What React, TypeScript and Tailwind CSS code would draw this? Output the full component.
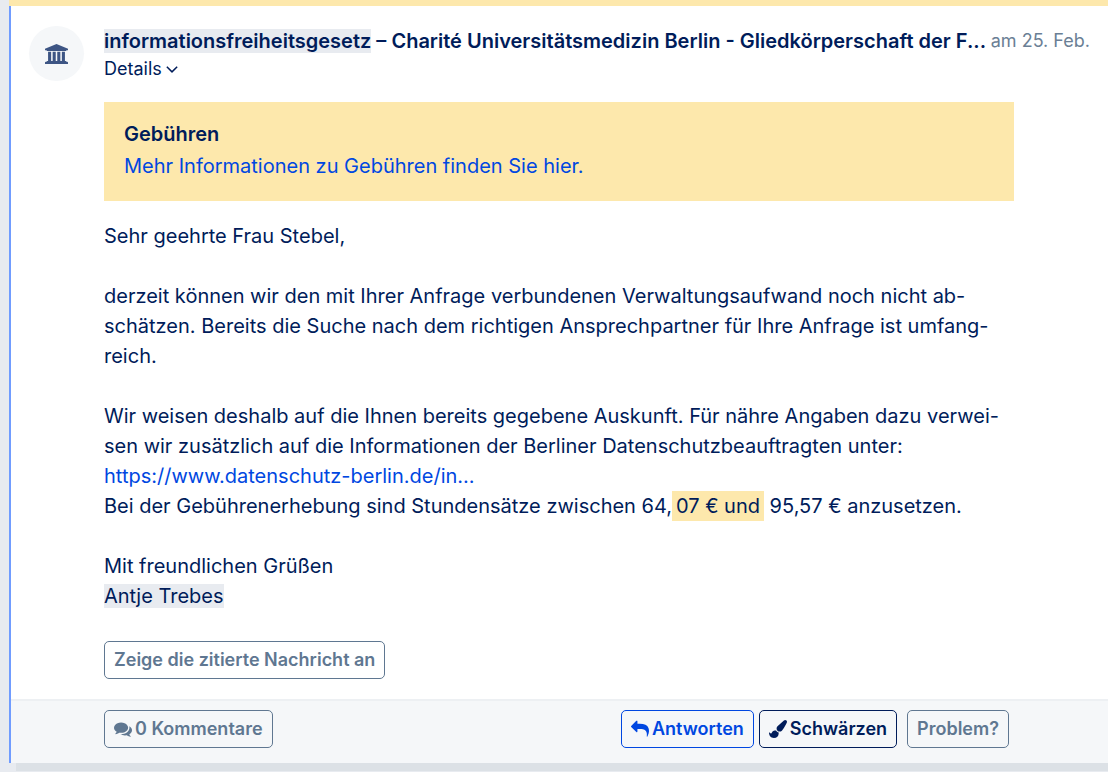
import type { ReactNode } from 'react'
import clsx from 'clsx'

// Font Awesome 4 glyphs on their 1792 unit grid
const icons = {
  university: {
    viewBox: '0 0 1920 1664',
    path: 'M960 0l960 384v128h-128q0 26-20.5 45t-48.5 19h-1526q-28 0-48.500-19t-20.500-45h-128v-128zM256 640h256v768h128v-768h256v768h128v-768h256v768h128v-768h256v768h59q28 0 48.500 19t20.500 45v64h-1664v-64q0-26 20.500-45t48.500-19h59v-768zM1851 1472q28 0 48.500 19t20.500 45v128h-1920v-128q0-26 20.500-45t48.500-19h1782z',
  },
  comments: {
    viewBox: '0 0 1792 1792',
    path: 'M1408 768q0 139-94 257t-256.500 186.500-353.500 68.500q-86 0-176-16-124 88-278 128-36 9-86 16h-3q-11 0-20.500-8t-11.500-21q-1-3-1-6.500t.5-6.500 2-6l2.500-5 3.500-5.500 4-5 4.500-5 4-4.500q5-6 23-25t26-29.500 22.500-29 25-38.500 20.500-44q-124-72-195-177t-71-224q0-139 94-257t256.500-186.500 353.500-68.500 353.500 68.500 256.500 186.500 94 257zm384 256q0 120-71 224.500t-195 176.500q10 24 20.500 44t25 38.500 22.500 29 26 29.500 23 25q1 1 4 4.500t4.500 5 4 5 3.500 5.500l2.500 5 2 6 .5 6.500-1 6.500q-3 14-13 22t-22 7q-50-7-86-16-154-40-278-128-90 16-176 16-271 0-472-132 58 4 88 4 161 0 309-45t264-129q125-92 192-212t67-254q0-77-23-152 129 71 204 178t75 230z',
  },
  reply: {
    viewBox: '0 0 1792 1792',
    path: 'M1792 1120q0 166-127 451-3 7-10.500 24t-13.500 30-13 22q-12 17-28 17-15 0-23.500-10t-8.500-25q0-9 2.500-26.500t2.500-23.500q5-68 5-123 0-101-17.500-181t-48.500-138.500-80-101-105.500-69.500-133-42.500-154-21.500-175.500-6h-224v256q0 26-19 45t-45 19-45-19l-512-512q-19-19-19-45t19-45l512-512q19-19 45-19t45 19 19 45v256h224q713 0 875 403 53 134 53 333z',
  },
  paintBrush: {
    viewBox: '0 0 1792 1792',
    path: 'M1615 0q70 0 122.500 46.500t52.500 116.500q0 63-45 151-332 629-465 752-97 91-218 91-126 0-216.500-92.500t-90.500-219.500q0-128 92-212l638-579q59-54 130-54zm-909 1034q39 76 106.500 130t150.500 76l1 71q4 213-129.500 347t-348.500 134q-123 0-218-46.500t-152.500-127.500-86.500-183-29-220q7 5 41 30t62 44.500 59 36.500 46 17q41 0 55-37 25-66 57.500-112.500t69.500-76 88-47.500 103-25.500 125-10.500z',
  },
  angleDown: {
    viewBox: '0 0 1792 1792',
    path: 'M1395 736q0 13-10 23l-466 466q-10 10-23 10t-23-10l-466-466q-10-10-10-23t10-23l50-50q10-10 23-10t23 10l393 393 393-393q10-10 23-10t23 10l50 50q10 10 10 23z',
  },
}

function Icon({ name, className }: { name: keyof typeof icons; className?: string }) {
  return (
    <svg
      viewBox={icons[name].viewBox}
      fill="currentColor"
      aria-hidden="true"
      className={clsx('shrink-0', className)}
    >
      <path d={icons[name].path} />
    </svg>
  )
}

type ButtonProps = {
  children: ReactNode
  className?: string
}

function OutlineButton({ children, className }: ButtonProps) {
  return (
    <button
      type="button"
      className={clsx(
        'inline-flex items-center gap-[3px] rounded-[5px] border px-[9px] py-[5px] text-[18px] leading-[26px] font-semibold whitespace-nowrap',
        className
      )}
    >
      {children}
    </button>
  )
}

function MessageHeader() {
  return (
    <header className="flex px-[18px] pt-5">
      <div className="flex size-[55px] shrink-0 items-center justify-center rounded-full bg-[#f5f7f9] text-[#3d5584]">
        <Icon name="university" className="h-5 w-[23px]" />
      </div>
      <div className="ml-5 min-w-0 grow">
        <div className="flex items-center gap-1 leading-[30px]">
          <h2 className="truncate font-semibold">
            <span className="bg-[#e8ebf0]">informationsfreiheitsgesetz</span> – Charité
            Universitätsmedizin Berlin - Gliedkörperschaft der F...
          </h2>
          <span className="ml-auto shrink-0 text-[18px] text-[#6b7f95]">am 25. Feb.</span>
        </div>
        <button type="button" className="flex items-center text-[18px] leading-[26px]">
          Details <Icon name="angleDown" className="size-5" />
        </button>
      </div>
    </header>
  )
}

function MessageBody() {
  return (
    <div className="mr-[94px] ml-[93px] pt-5 pb-5">
      <div className="bg-[#fde8ac] px-5 pt-[17px] pb-5">
        <h3 className="font-semibold leading-[30px]">Gebühren</h3>
        <p className="mt-[2px]">
          <a href="#gebuehren" className="text-[#0047e1]">
            Mehr Informationen zu Gebühren finden Sie hier.
          </a>
        </p>
      </div>
      <div className="mt-5 space-y-[30px]">
        <p>Sehr geehrte Frau Stebel,</p>
        <p>
          derzeit können wir den mit Ihrer Anfrage verbundenen Verwaltungsaufwand noch nicht ab-
          <br />
          schätzen. Bereits die Suche nach dem richtigen Ansprechpartner für Ihre Anfrage ist umfang-
          <br />
          reich.
        </p>
        <p>
          Wir weisen deshalb auf die Ihnen bereits gegebene Auskunft. Für nähre Angaben dazu verwei-
          <br />
          sen wir zusätzlich auf die Informationen der Berliner Datenschutzbeauftragten unter:
          <br />
          <a href="https://www.datenschutz-berlin.de/" className="text-[#0047e1]">
            https://www.datenschutz-berlin.de/in...
          </a>
          <br />
          Bei der Gebührenerhebung sind Stundensätze zwischen 64,
          <mark className="bg-[#fde8ac] px-1 py-[3px] text-inherit">07 € und</mark> 95,57 € anzusetzen.
        </p>
        <p>
          Mit freundlichen Grüßen
          <br />
          <span className="bg-[#e8ebf0]">Antje Trebes</span>
        </p>
      </div>
      <OutlineButton className="mt-[30px] border-[#5f7791] text-[#5f7791]">
        Zeige die zitierte Nachricht an
      </OutlineButton>
    </div>
  )
}

function MessageFooter() {
  return (
    <footer className="flex items-center border-t-2 border-[#edf0f3] bg-[#f5f7f9] pt-[9px] pr-[99px] pb-[15px] pl-[93px]">
      <OutlineButton className="border-[#5f7791] text-[#5f7791]">
        <Icon name="comments" className="size-[18px]" />0 Kommentare
      </OutlineButton>
      <div className="ml-auto flex items-center">
        <OutlineButton className="border-[#0047e1] text-[#0047e1]">
          <Icon name="reply" className="size-[18px]" />
          Antworten
        </OutlineButton>
        <OutlineButton className="ml-[5px] border-[#001c5a] text-[#001c5a]">
          <Icon name="paintBrush" className="size-[18px]" />
          Schwärzen
        </OutlineButton>
        <OutlineButton className="ml-[10px] border-[#5f7791] text-[#5f7791]">Problem?</OutlineButton>
      </div>
    </footer>
  )
}

export default function App() {
  return (
    <div className="min-h-screen bg-[#e8ebf0] pl-[9px] font-[Inter,sans-serif] text-[20px] leading-[30px] text-[#001c5a]">
      <div className="h-[6px] bg-[#fde8ac]" />
      <article className="border-l-2 border-[#709cff] bg-white">
        <MessageHeader />
        <MessageBody />
        <MessageFooter />
      </article>
      <div className="ml-[7px] h-2 bg-[#dce1e6]" />
    </div>
  )
}
